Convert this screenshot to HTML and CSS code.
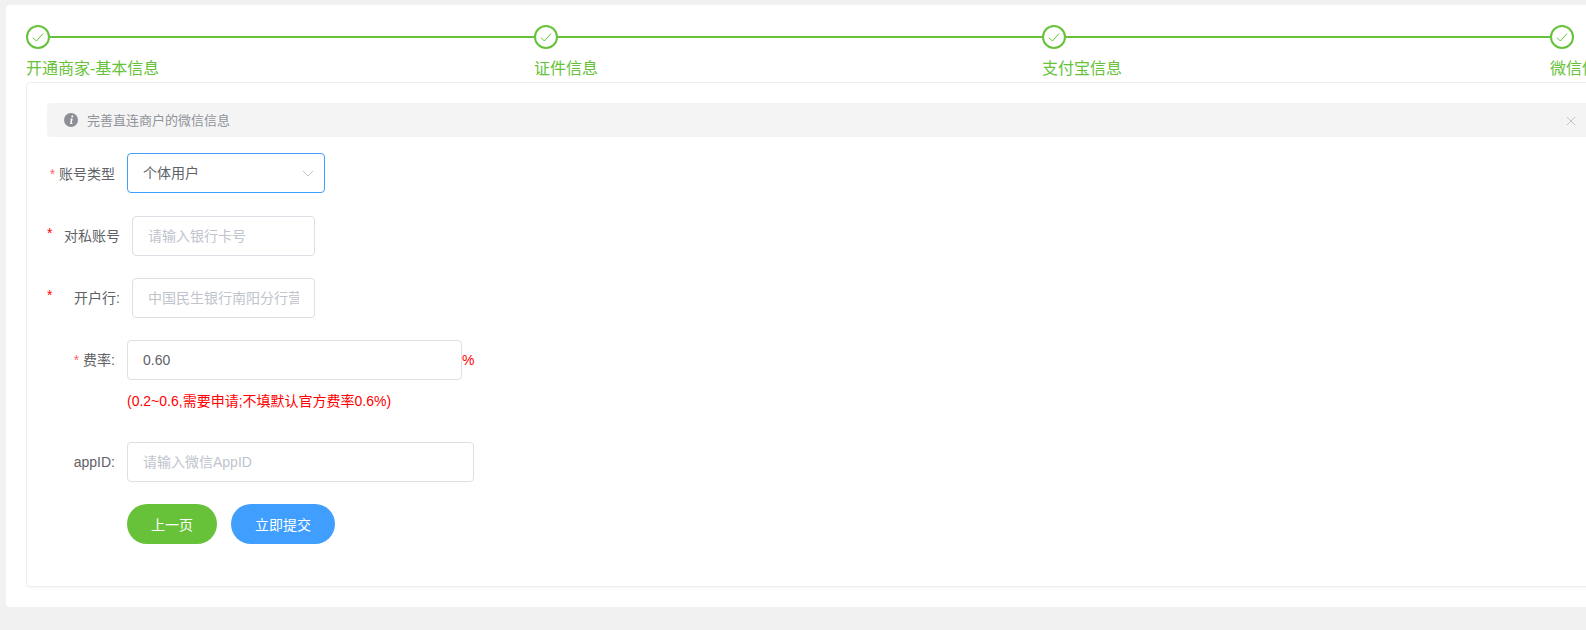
FILE: index.html
```html
<!DOCTYPE html>
<html lang="zh">
<head>
<meta charset="utf-8">
<title>开通商家</title>
<link rel="stylesheet" href="styles.css">
</head>
<body>
<main class="page">
  <ol class="steps">
    <li class="step">
      <div class="step-head"><span class="step-dot"><svg viewBox="0 0 12 12" width="12" height="12"><path d="M1 6.6 4.4 10 11 2.6" fill="none" stroke="#67c23a" stroke-width="1"/></svg></span><span class="step-line"></span></div>
      <div class="step-title">开通商家-基本信息</div>
    </li>
    <li class="step">
      <div class="step-head"><span class="step-dot"><svg viewBox="0 0 12 12" width="12" height="12"><path d="M1 6.6 4.4 10 11 2.6" fill="none" stroke="#67c23a" stroke-width="1"/></svg></span><span class="step-line"></span></div>
      <div class="step-title">证件信息</div>
    </li>
    <li class="step">
      <div class="step-head"><span class="step-dot"><svg viewBox="0 0 12 12" width="12" height="12"><path d="M1 6.6 4.4 10 11 2.6" fill="none" stroke="#67c23a" stroke-width="1"/></svg></span><span class="step-line"></span></div>
      <div class="step-title">支付宝信息</div>
    </li>
    <li class="step">
      <div class="step-head"><span class="step-dot"><svg viewBox="0 0 12 12" width="12" height="12"><path d="M1 6.6 4.4 10 11 2.6" fill="none" stroke="#67c23a" stroke-width="1"/></svg></span></div>
      <div class="step-title">微信信息</div>
    </li>
  </ol>

  <section class="card">
    <div class="alert">
      <svg class="alert-icon" viewBox="0 0 14 14" width="14" height="14"><circle cx="7" cy="7" r="7" fill="#8c8f96"/><path d="M7.6 2.6h1.7l-.3 1.6H7.3zM6.9 5.4h1.8L7.8 9.8c-.1.5.3.5.9.1l.1.5c-.8.8-2.8 1.1-2.6-.2l.6-3.6-.7-.2z" fill="#fff"/></svg>
      <span class="alert-text">完善直连商户的微信信息</span>
      <svg class="alert-close" viewBox="0 0 10 10" width="10" height="10"><path d="M1 1l8 8M9 1 1 9" stroke="#c0c4cc" stroke-width="1" fill="none"/></svg>
    </div>

    <div class="row row-select">
      <label class="label"><span class="star">*</span> 账号类型</label>
      <div class="control select">
        <span>个体用户</span>
        <svg viewBox="0 0 12 7" width="12" height="7"><path d="M1 1l5 5 5-5" fill="none" stroke="#c0c4cc" stroke-width="1"/></svg>
      </div>
    </div>

    <div class="row row-bank">
      <span class="star star-far">*</span>
      <label class="label label-raised">对私账号</label>
      <div class="control control-short placeholder"><span class="clip">请输入银行卡号</span></div>
    </div>

    <div class="row row-bank row-bank-next">
      <span class="star star-far">*</span>
      <label class="label label-raised">开户行:</label>
      <div class="control control-short placeholder"><span class="clip">中国民生银行南阳分行营业部</span></div>
    </div>

    <div class="row row-fee">
      <label class="label label-raised"><span class="star">*</span> 费率:</label>
      <div class="control control-fee">0.60</div>
      <span class="unit">%</span>
    </div>
    <p class="hint">(0.2~0.6,需要申请;不填默认官方费率0.6%)</p>

    <div class="row row-app">
      <label class="label">appID:</label>
      <div class="control control-app placeholder">请输入微信AppID</div>
    </div>

    <div class="actions">
      <button class="btn btn-prev" type="button">上一页</button>
      <button class="btn btn-submit" type="button">立即提交</button>
    </div>
  </section>
</main>
</body>
</html>
```
FILE: styles.css
```css
* { box-sizing: border-box; }
html, body { margin: 0; height: 630px; overflow: hidden; }
body {
  background: #f1f1f2;
  font-family: "Liberation Sans", "Noto Sans CJK SC", sans-serif;
  font-size: 14px;
  color: #606266;
  padding: 5px 0 0 6px;
}
.page {
  width: 1600px;
  height: 602px;
  background: #fff;
  border-radius: 4px;
  padding: 20px 0 0 20px;
}
.steps {
  list-style: none;
  margin: 0;
  padding: 0;
  display: flex;
  height: 57px;
}
.step { width: 508px; flex: none; color: #67c23a; }
.step-head { display: flex; align-items: center; height: 24px; }
.step-dot {
  width: 24px;
  height: 24px;
  flex: none;
  border: 2px solid #67c23a;
  border-radius: 50%;
  display: flex;
  align-items: center;
  justify-content: center;
}
.step-line { flex: 1; height: 2px; background: #67c23a; }
.step-title { font-size: 16px; line-height: 40px; white-space: nowrap; }
.card {
  width: 1580px;
  height: 505px;
  border: 1px solid #ebeef5;
  border-radius: 4px;
  box-shadow: 0 1px 2px rgba(0, 0, 0, .04);
  padding: 20px 0 0 20px;
}
.alert {
  width: 1545px;
  height: 34px;
  background: #f4f4f5;
  border-radius: 4px;
  display: flex;
  align-items: center;
  padding: 0 16px 0 17px;
  color: #909399;
  font-size: 13px;
}
.alert-icon { flex: none; margin-right: 9px; }
.alert-text { margin-bottom: 2px; }
.alert-close { margin: 2px 0 0 auto; }
.row { display: flex; align-items: center; }
.row-select { margin-top: 16px; }
.row-bank { margin-top: 23px; }
.row-bank-next { margin-top: 22px; }
.row-fee { margin-top: 22px; }
.row-app { margin-top: 31px; }
.label { width: 68px; margin-right: 12px; white-space: nowrap; text-align: right; flex: none; }
.label-raised { margin-bottom: 2px; }
.star { color: #f56c6c; }
.star-far { color: #f00; width: 5px; flex: none; align-self: flex-start; margin-top: 9px; }
.control {
  height: 40px;
  border: 1px solid #dcdfe6;
  border-radius: 4px;
  padding: 0 15px;
  line-height: 38px;
  white-space: nowrap;
  overflow: hidden;
  flex: none;
}
.select {
  width: 198px;
  border-color: #409eff;
  display: flex;
  align-items: center;
  justify-content: space-between;
  padding-right: 10px;
}
.control-short { width: 183px; }
.control-fee { width: 335px; }
.control-app { width: 347px; }
.placeholder { color: #c0c4cc; }
.clip { display: block; overflow: hidden; }
.unit { color: #f00; }
.hint { margin: 11px 0 0 80px; color: #f00; line-height: 20px; }
.actions { display: flex; gap: 14px; margin: 22px 0 0 80px; }
.btn {
  height: 40px;
  border: 0;
  border-radius: 20px;
  color: #fff;
  font: inherit;
  padding: 0;
}
.btn-prev { width: 90px; background: #67c23a; }
.btn-submit { width: 104px; background: #409eff; }
```
